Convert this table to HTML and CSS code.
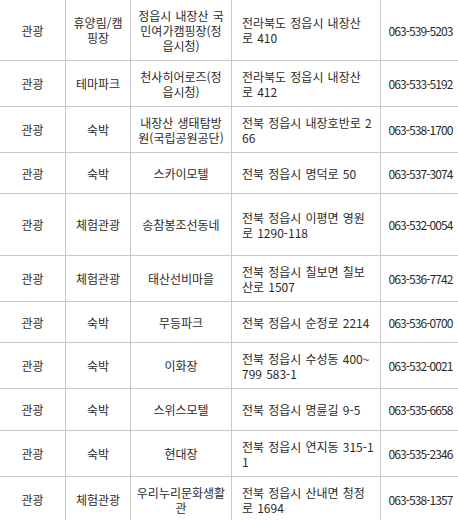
FILE: index.html
```html
<!DOCTYPE html>
<html lang="ko">
<head>
<meta charset="utf-8">
<link rel="stylesheet" href="styles.css">
</head>
<body>
<table class="list">
  <colgroup>
    <col class="c-type"><col class="c-cat"><col class="c-name"><col class="c-addr"><col class="c-tel">
  </colgroup>
  <tbody>
    <tr class="h61"><td>관광</td><td>휴양림/캠<br>핑장</td><td>정읍시 내장산 국<br>민여가캠핑장(정<br>읍시청)</td><td class="addr">전라북도 정읍시 내장산<br>로 410</td><td class="tel">063-539-5203</td></tr>
    <tr class="h46"><td>관광</td><td>테마파크</td><td>천사히어로즈(정<br>읍시청)</td><td class="addr">전라북도 정읍시 내장산<br>로 412</td><td class="tel">063-533-5192</td></tr>
    <tr class="h46"><td>관광</td><td>숙박</td><td>내장산 생태탐방<br>원(국립공원공단)</td><td class="addr">전북 정읍시 내장호반로 2<br>66</td><td class="tel">063-538-1700</td></tr>
    <tr class="h41"><td>관광</td><td>숙박</td><td>스카이모텔</td><td class="addr">전북 정읍시 명덕로 50</td><td class="tel">063-537-3074</td></tr>
    <tr class="h62"><td>관광</td><td>체험관광</td><td>송참봉조선동네</td><td class="addr">전북 정읍시 이평면 영원<br>로 1290-118</td><td class="tel">063-532-0054</td></tr>
    <tr class="h46"><td>관광</td><td>체험관광</td><td>태산선비마을</td><td class="addr">전북 정읍시 칠보면 칠보<br>산로 1507</td><td class="tel">063-536-7742</td></tr>
    <tr class="h41"><td>관광</td><td>숙박</td><td>무등파크</td><td class="addr">전북 정읍시 순정로 2214</td><td class="tel">063-536-0700</td></tr>
    <tr class="h46"><td>관광</td><td>숙박</td><td>이화장</td><td class="addr">전북 정읍시 수성동 400~<br>799 583-1</td><td class="tel">063-532-0021</td></tr>
    <tr class="h42"><td>관광</td><td>숙박</td><td>스위스모텔</td><td class="addr">전북 정읍시 명륜길 9-5</td><td class="tel">063-535-6658</td></tr>
    <tr class="h46"><td>관광</td><td>숙박</td><td>현대장</td><td class="addr">전북 정읍시 연지동 315-1<br>1</td><td class="tel">063-535-2346</td></tr>
    <tr class="h46"><td>관광</td><td>체험관광</td><td>우리누리문화생활<br>관</td><td class="addr">전북 정읍시 산내면 청정<br>로 1694</td><td class="tel">063-538-1357</td></tr>
  </tbody>
</table>
</body>
</html>
```
FILE: styles.css
```css
html, body {
  margin: 0;
  padding: 0;
  background: #fff;
}
body {
  font-family: "Noto Sans CJK KR", "Noto Sans", sans-serif;
  font-size: 12px;
  color: #2b2b2b;
}
.list {
  border-collapse: separate;
  border-spacing: 0;
  table-layout: fixed;
  width: 461px;
}
.c-type { width: 66px; }
.c-cat { width: 65px; }
.c-name { width: 101px; }
.c-addr { width: 149px; }
.c-tel { width: 80px; }
.list td {
  box-sizing: border-box;
  border-right: 1px solid #c8c8c8;
  border-bottom: 1px solid #c8c8c8;
  padding: 0 2px;
  text-align: center;
  vertical-align: middle;
  line-height: 15px;
  word-spacing: 0.8px;
  white-space: nowrap;
}
.list td.addr {
  text-align: left;
  padding: 0 2px 0 10px;
}
.list td.tel {
  letter-spacing: -0.9px;
}
.h61 td { height: 61px; }
.h62 td { height: 62px; }
.h46 td { height: 46px; }
.h42 td { height: 42px; }
.h41 td { height: 41px; }
```
